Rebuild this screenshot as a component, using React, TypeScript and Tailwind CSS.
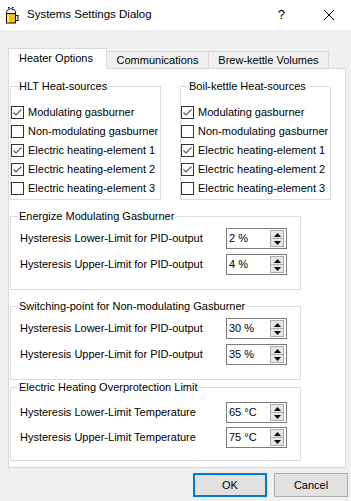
import React from 'react';

const BeerIcon = () => (
  <svg width="14" height="17" viewBox="0 0 14 17">
    <rect x="1.5" y="6.5" width="9" height="9.5" fill="#f2c200" stroke="#000" />
    <rect x="10.5" y="8.5" width="2.5" height="5" fill="none" stroke="#000" />
    <rect x="2" y="7" width="2" height="8.5" fill="#ffe680" />
    <path d="M1.5 6.5 C1.5 3 3 2.5 4 3 C4.5 1 7 1 7.5 3 C8.5 2 10.5 2.5 10.5 6.5 Z" fill="#fff" stroke="#000" />
    <rect x="3" y="0" width="1.5" height="1.5" fill="#000" />
    <rect x="7" y="0" width="1.5" height="1.5" fill="#000" />
  </svg>
);

const Check = ({ checked, label }: { checked: boolean; label: string }) => (
  <div className="h-[19px] flex items-center">
    <div className="w-[13px] h-[13px] border border-[#333333] bg-white flex items-center justify-center">
      {checked && (
        <svg width="11" height="11" viewBox="0 0 11 11">
          <path d="M1.5 5.5 L4 8 L9.5 2.5" fill="none" stroke="#555555" strokeWidth="1.1" />
        </svg>
      )}
    </div>
    <span className="ml-[4px] whitespace-nowrap">{label}</span>
  </div>
);

const Spin = ({ value }: { value: string }) => (
  <div className="w-[61px] h-[21px] border border-[#7a7a7a] bg-white flex items-center justify-between pl-[2px] pr-[2px]">
    <span>{value}</span>
    <div className="flex flex-col w-[14px] h-[17px] border border-[#adadad]">
      <div className="flex-1 bg-[#e6e6e6] border-b border-[#adadad] flex items-center justify-center">
        <svg width="7" height="4" viewBox="0 0 7 4"><path d="M0 4 L3.5 0 L7 4 Z" fill="#000" /></svg>
      </div>
      <div className="flex-1 bg-[#e6e6e6] flex items-center justify-center">
        <svg width="7" height="4" viewBox="0 0 7 4"><path d="M0 0 L3.5 4 L7 0 Z" fill="#000" /></svg>
      </div>
    </div>
  </div>
);

const SpinRow = ({ label, value }: { label: string; value: string }) => (
  <div className="flex items-center pl-[9px]">
    <span className="w-[206px] whitespace-nowrap">{label}</span>
    <Spin value={value} />
  </div>
);

const sources = [
  ['Modulating gasburner', true],
  ['Non-modulating gasburner', false],
  ['Electric heating-element 1', true],
  ['Electric heating-element 2', true],
  ['Electric heating-element 3', false],
] as const;

const SourceGroup = ({ title }: { title: string }) => (
  <fieldset className="w-[151px] h-[121px] border border-[#dcdcdc]">
    <legend className="ml-[7px] px-[1px] leading-[14px]">{title}</legend>
    <div className="pt-[10px]">
      {sources.map(([label, checked]) => (
        <Check key={label} label={label} checked={checked} />
      ))}
    </div>
  </fieldset>
);

export default function App() {
  return (
    <div className="w-[351px] h-[501px] bg-[#f0f0f0] flex flex-col font-['Liberation_Sans',Arial,sans-serif] text-[11px] text-black overflow-hidden">
      <div className="h-[30px] bg-white flex items-center">
        <div className="ml-[5px] mt-[1px]">
          <BeerIcon />
        </div>
        <span className="ml-[8px] text-[11.5px]">Systems Settings Dialog</span>
        <span className="ml-auto mr-[39px] text-[13px]">?</span>
        <svg className="mr-[17px]" width="10" height="10" viewBox="0 0 10 10">
          <path d="M0 0 L10 10 M10 0 L0 10" stroke="#000" strokeWidth="1" />
        </svg>
      </div>

      <div className="pt-[18px] pl-[8px]">
        <div className="flex items-end h-[21px] relative z-10">
          <div className="w-[99px] h-[21px] bg-white border border-[#d9d9d9] border-b-0 flex items-center pl-[10px] pb-[1px]">
            Heater Options
          </div>
          <div className="w-[102px] h-[18px] border border-[#d9d9d9] border-b-0 border-l-0 flex items-center justify-center">
            Communications
          </div>
          <div className="w-[120px] h-[18px] border border-[#d9d9d9] border-b-0 border-l-0 flex items-center justify-center">
            Brew-kettle Volumes
          </div>
        </div>
        <div className="w-[338px] h-[400px] -mt-[1px] bg-white border border-[#d9d9d9] px-[1px] pt-[10px]">
          <div className="flex gap-[19px]">
            <SourceGroup title="HLT Heat-sources" />
            <SourceGroup title="Boil-kettle Heat-sources" />
          </div>

          <fieldset className="mt-[9px] w-[291px] h-[81px] border border-[#dcdcdc]">
            <legend className="ml-[7px] px-[1px] leading-[14px]">Energize Modulating Gasburner</legend>
            <div className="pt-[5px] flex flex-col gap-[5px]">
              <SpinRow label="Hysteresis Lower-Limit for PID-output" value="2 %" />
              <SpinRow label="Hysteresis Upper-Limit for PID-output" value="4 %" />
            </div>
          </fieldset>

          <fieldset className="mt-[9px] w-[291px] h-[81px] border border-[#dcdcdc]">
            <legend className="ml-[7px] px-[1px] leading-[14px]">Switching-point for Non-modulating Gasburner</legend>
            <div className="pt-[5px] flex flex-col gap-[5px]">
              <SpinRow label="Hysteresis Lower-Limit for PID-output" value="30 %" />
              <SpinRow label="Hysteresis Upper-Limit for PID-output" value="35 %" />
            </div>
          </fieldset>

          <fieldset className="w-[291px] h-[81px] border border-[#dcdcdc]">
            <legend className="ml-[7px] px-[1px] leading-[14px]">Electric Heating Overprotection Limit</legend>
            <div className="pt-[8px] flex flex-col gap-[4px]">
              <SpinRow label="Hysteresis Lower-Limit Temperature" value="65 °C" />
              <SpinRow label="Hysteresis Upper-Limit Temperature" value="75 °C" />
            </div>
          </fieldset>
        </div>
      </div>

      <div className="flex justify-end gap-[7px] pr-[3px] pt-[5px]">
        <button className="w-[74px] h-[24px] bg-[#e1e1e1] border-2 border-[#0078d7]">OK</button>
        <button className="w-[74px] h-[24px] bg-[#e1e1e1] border border-[#adadad]">Cancel</button>
      </div>
    </div>
  );
}
